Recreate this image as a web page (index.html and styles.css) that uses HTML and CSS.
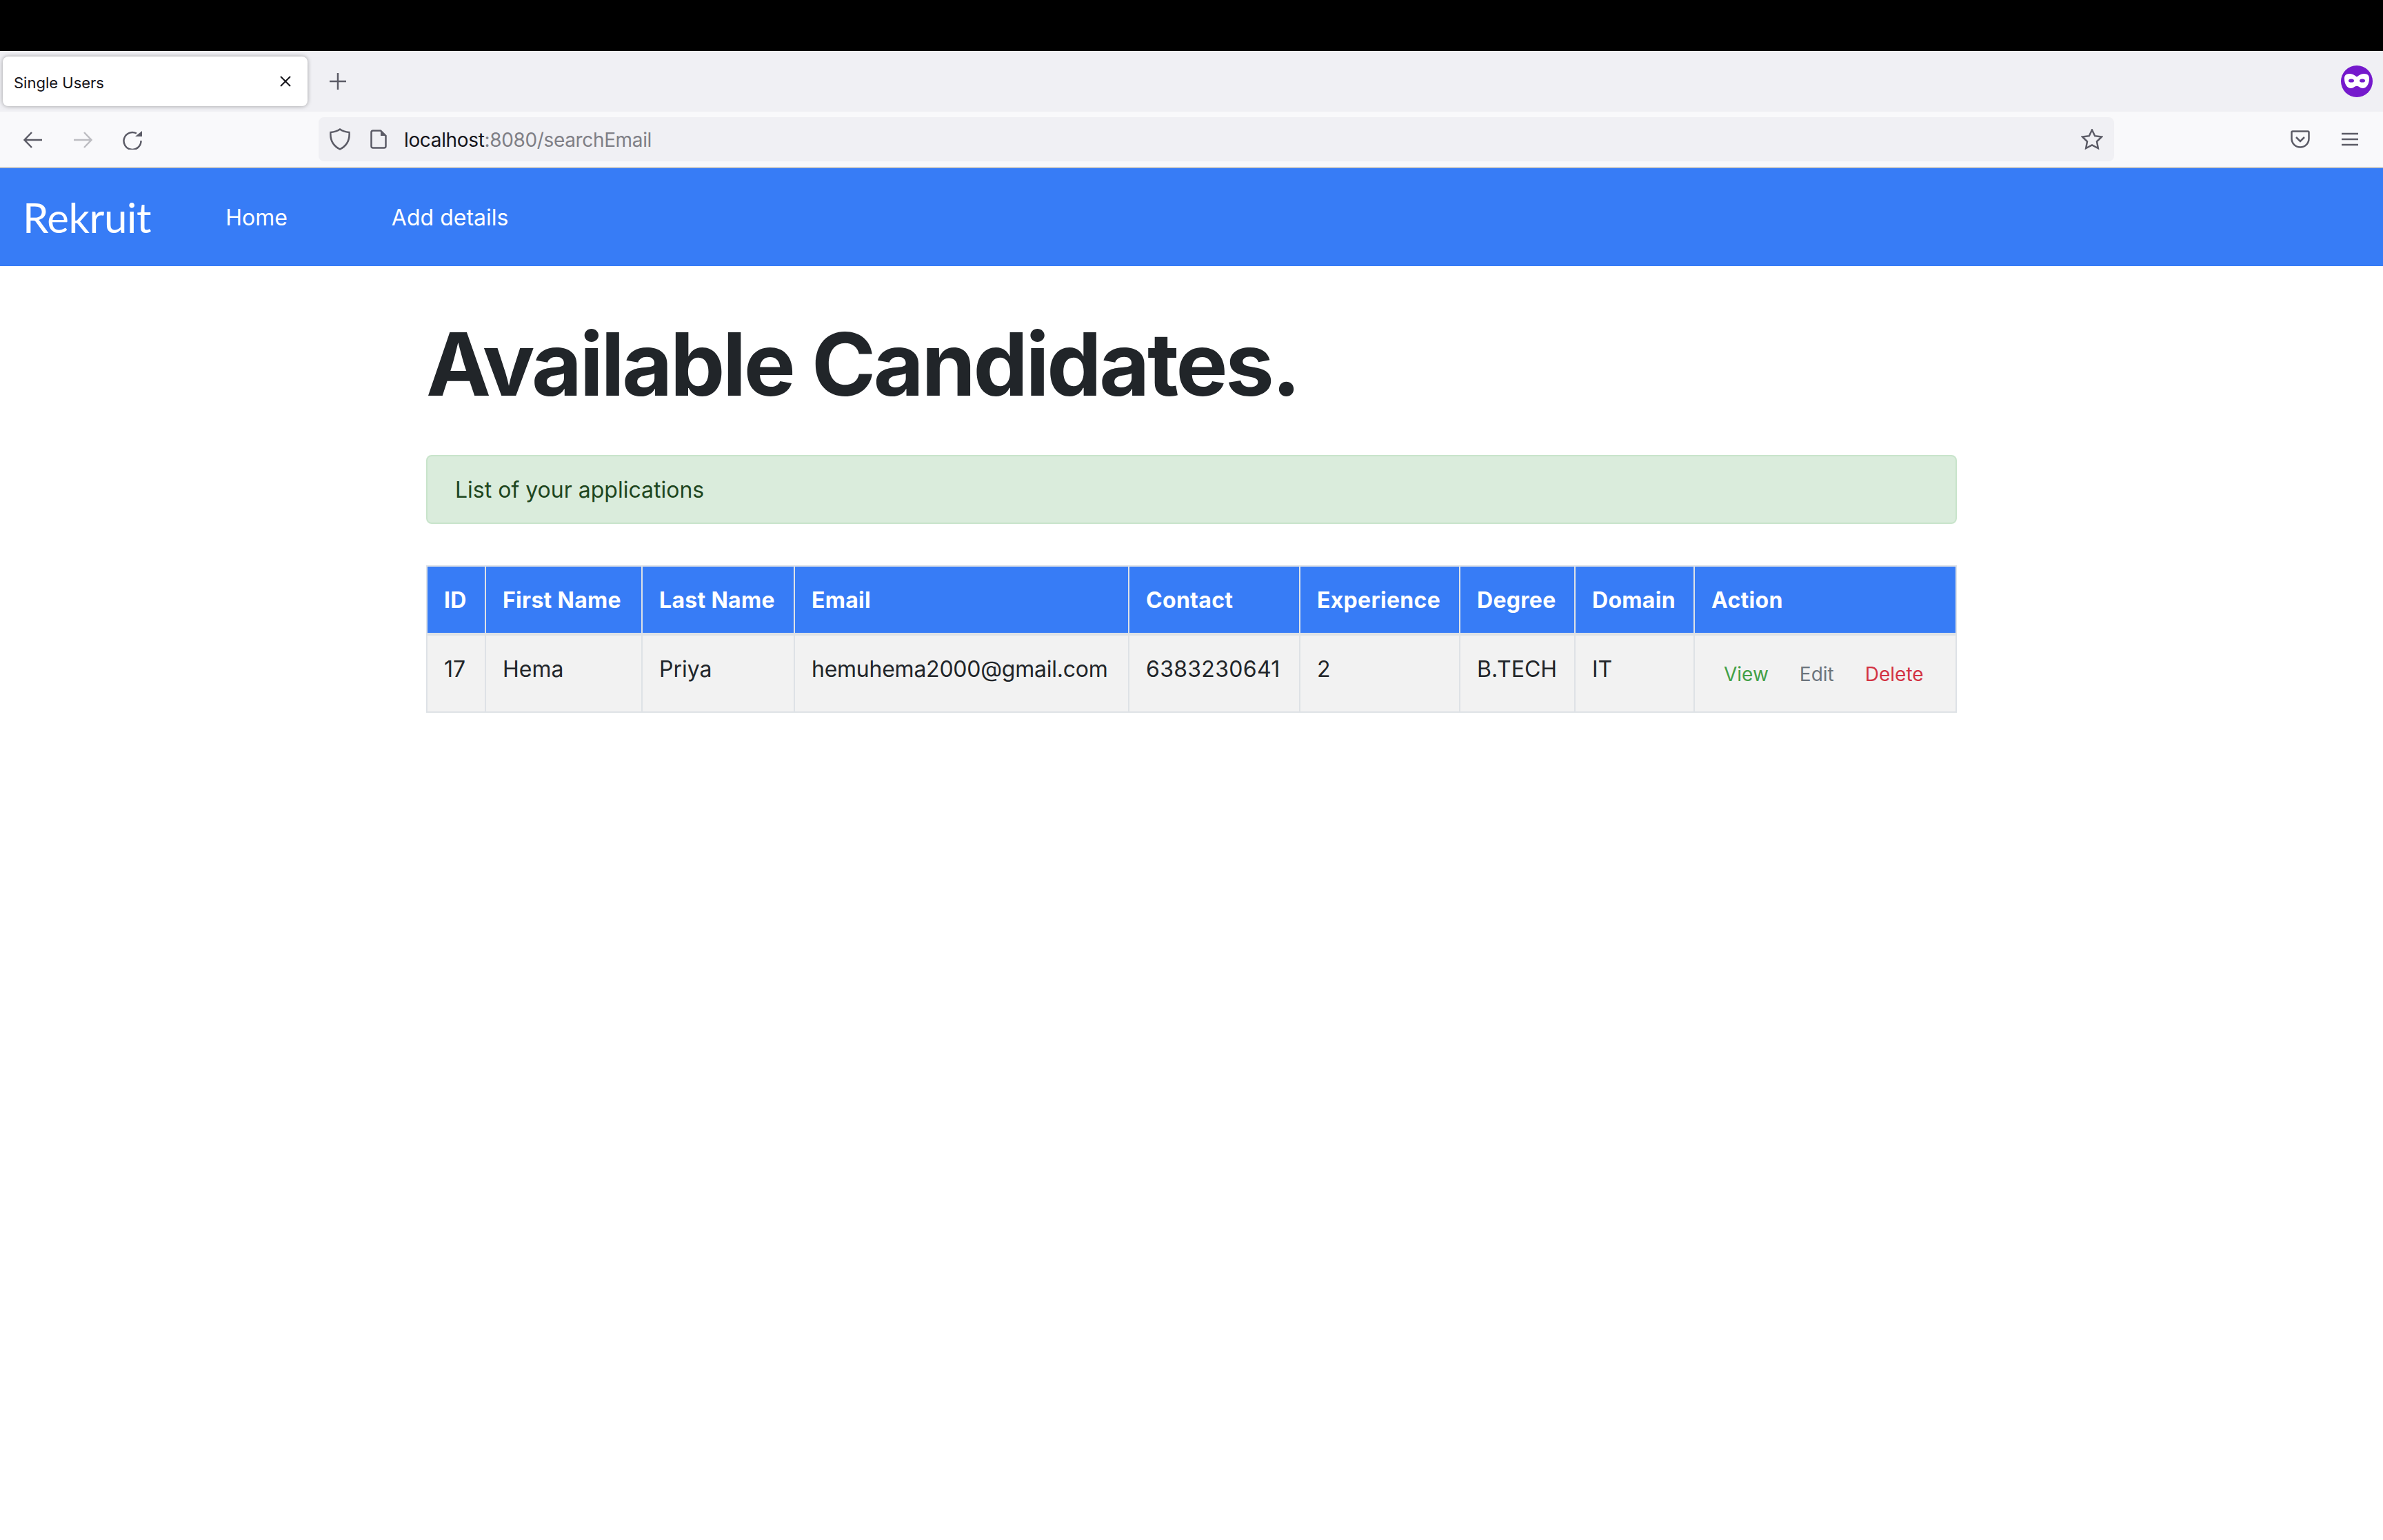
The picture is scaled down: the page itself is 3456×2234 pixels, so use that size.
FILE: index.html
```html
<!DOCTYPE html>
<html lang="en">
<head>
  <meta charset="UTF-8" />
  <title>Single Users</title>
  <link rel="stylesheet" href="styles.css">
</head>

<body>
  <!-- Browser chrome -->
  <div class="topbar"></div>
  <div class="tabstrip">
    <div class="tab">
      <span class="tab-title">Single Users</span>
      <svg class="tab-close" viewBox="0 0 16 16"><path d="M1 1 15 15M15 1 1 15"/></svg>
    </div>
    <svg class="new-tab" viewBox="0 0 26 26"><path d="M13 1V25M1 13H25"/></svg>
    <svg class="mask" viewBox="0 0 46 46">
      <circle cx="23" cy="23" r="23" fill="#7519cc"/>
      <path fill="#fff" d="M12 12C16.500 11.500 20 14 23 16.500C26 14 29.500 11.500 34 12C38.500 12.500 41 14 41 19C41 27 37 33 31.500 33C27.500 33 26 29.800 23 29.800C20 29.800 18.500 33 14.500 33C9 33 5 27 5 19C5 14 7.500 12.500 12 12Z"/>
      <ellipse cx="15" cy="22" rx="4" ry="2.600" fill="#7519cc"/>
      <ellipse cx="31" cy="22" rx="4" ry="2.600" fill="#7519cc"/>
    </svg>
  </div>
  <div class="toolbar">
    <svg class="tool back" viewBox="0 0 28 24"><path d="M27 12H2M12 1 1.500 12 12 23"/></svg>
    <svg class="tool forward" viewBox="0 0 28 24"><path d="M1 12H26M16 1 26.500 12 16 23"/></svg>
    <svg class="tool reload" viewBox="0 0 28 28">
      <path d="M26.500 15A12.500 12.500 0 1 1 20 4.500"/>
      <path class="solid" d="M18 9 28 1V9Z"/>
    </svg>
    <div class="urlbar">
      <svg class="tool shield" viewBox="0 0 30 32"><path d="M15 1.500C19 4.500 23.500 5.500 28.500 6C29.500 18 24 26 15 30.500C6 26 .5 18 1.500 6C6.500 5.500 11 4.500 15 1.500Z"/></svg>
      <svg class="tool doc" viewBox="0 0 24 28">
        <path d="M4 1.500H15L22.500 9V24C22.500 25.500 21.500 26.500 20 26.500H4C2.500 26.500 1.500 25.500 1.500 24V4C1.500 2.500 2.500 1.500 4 1.500Z"/>
        <path class="solid" d="M15 1.500 22.500 9H15Z"/>
      </svg>
      <span class="url">localhost<span class="url-rest">:8080/searchEmail</span></span>
      <svg class="tool star" viewBox="0 0 32 30"><path d="M16 1.500 20.200 10.200 30 11.500 23 18.300 24.800 28 16 23.300 7.200 28 9 18.300 2 11.500 11.800 10.200Z"/></svg>
    </div>
    <svg class="tool pocket" viewBox="0 0 28 26">
      <path d="M3 1.500H25C26 1.500 26.500 2 26.500 3V12C26.500 19 21 24.500 14 24.500C7 24.500 1.500 19 1.500 12V3C1.500 2 2 1.500 3 1.500Z"/>
      <path d="M8 10 14 16 20 10"/>
    </svg>
    <svg class="tool menu" viewBox="0 0 24 20"><path d="M0 2H24M0 10H24M0 18H24"/></svg>
  </div>

  <!-- Navigation -->
  <nav class="navbar">
    <a class="brand" href="#">Rekruit</a>
    <a class="nav-link" href="#">Home</a>
    <a class="nav-link" href="#">Add details</a>
  </nav>

  <main class="container">
    <h1 class="page-title">Available Candidates.</h1>
    <div class="alert">List of your applications</div>

    <table class="users">
      <colgroup>
        <col class="col-id">
        <col class="col-first">
        <col class="col-last">
        <col class="col-email">
        <col class="col-contact">
        <col class="col-exp">
        <col class="col-degree">
        <col class="col-domain">
        <col class="col-action">
      </colgroup>
      <thead>
        <tr>
          <th>ID</th>
          <th>First Name</th>
          <th>Last Name</th>
          <th>Email</th>
          <th>Contact</th>
          <th>Experience</th>
          <th>Degree</th>
          <th>Domain</th>
          <th>Action</th>
        </tr>
      </thead>
      <tbody>
        <tr>
          <td>17</td>
          <td>Hema</td>
          <td>Priya</td>
          <td class="cell-email">hemuhema2000@gmail.com</td>
          <td class="cell-phone">6383230641</td>
          <td>2</td>
          <td>B.TECH</td>
          <td>IT</td>
          <td>
            <div class="actions">
              <a class="btn btn-view" href="#">View</a>
              <a class="btn btn-edit" href="#">Edit</a>
              <a class="btn btn-delete" href="#">Delete</a>
            </div>
          </td>
        </tr>
      </tbody>
    </table>
  </main>
</body>
</html>
```

FILE: styles.css
```css
body {
  margin: 0;
  background: #fff;
  color: #212529;
  font-family: Inter, "Liberation Sans", sans-serif;
  font-size: 32px;
  line-height: 48px;
}

a {
  text-decoration: none;
}

svg {
  display: block;
  flex: none;
}

/* browser chrome */
.topbar {
  height: 74px;
  background: #000;
}

.tabstrip {
  height: 88px;
  background: #f0f0f4;
  display: flex;
  align-items: center;
  padding: 0 15px 0 4px;
}

.tab {
  width: 442px;
  height: 72px;
  box-sizing: border-box;
  padding: 0 24px 0 16px;
  background: #fff;
  border-radius: 8px;
  box-shadow: 0 0 6px rgba(0, 0, 0, 0.35);
  display: flex;
  align-items: center;
  justify-content: space-between;
}

.tab-title {
  font-size: 22px;
  line-height: 30px;
  color: #15141a;
  margin-top: 4px;
}

.tab-close {
  width: 16px;
  height: 16px;
  fill: none;
  stroke: #15141a;
  stroke-width: 2;
}

.new-tab {
  width: 26px;
  height: 26px;
  margin-left: 31px;
  fill: none;
  stroke: #5b5b66;
  stroke-width: 2.500;
}

.mask {
  width: 46px;
  height: 46px;
  margin-left: auto;
}

.toolbar {
  height: 80px;
  background: #f9f9fb;
  border-bottom: 2px solid #ccc;
  display: flex;
  align-items: center;
}

.tool {
  fill: none;
  stroke: #5b5b66;
  stroke-width: 2.500;
}

.tool .solid {
  fill: #5b5b66;
  stroke: none;
}

.back {
  width: 28px;
  height: 24px;
  margin-left: 34px;
  margin-top: 2px;
}

.forward {
  width: 28px;
  height: 24px;
  margin-left: 44px;
  margin-top: 2px;
  stroke: #bdbdc2;
}

.reload {
  width: 28px;
  height: 28px;
  margin-left: 44px;
  margin-top: 2px;
}

.urlbar {
  width: 2604px;
  height: 64px;
  margin-left: 256px;
  background: #f0f0f4;
  border-radius: 8px;
  display: flex;
  align-items: center;
  padding: 0 16px;
  box-sizing: border-box;
}

.shield {
  width: 30px;
  height: 32px;
}

.doc {
  width: 24px;
  height: 28px;
  margin-left: 29px;
}

.url {
  margin-left: 25px;
  margin-top: 2px;
  font-size: 28px;
  line-height: 40px;
  letter-spacing: -0.35px;
  color: #15141a;
}

.url-rest {
  color: #7f7f86;
}

.star {
  width: 32px;
  height: 30px;
  margin-left: auto;
}

.pocket {
  width: 28px;
  height: 26px;
  margin-left: 256px;
}

.menu {
  width: 24px;
  height: 20px;
  margin-left: 46px;
}

/* site nav */
.navbar {
  height: 142px;
  background: #377cf6;
  display: flex;
  align-items: center;
  padding-left: 33px;
}

.brand {
  font-family: Lato, sans-serif;
  font-weight: 400;
  font-size: 60px;
  line-height: 72px;
  letter-spacing: -0.4px;
  color: #fff;
  margin-right: 108px;
}

.nav-link {
  color: #fff;
  margin-right: 151px;
  margin-top: 2px;
}

/* page */
.container {
  width: 2220px;
  margin: 0 auto;
  padding-top: 65px;
}

.page-title {
  margin: 0 0 55px;
  font-size: 126px;
  line-height: 154px;
  font-weight: 700;
  letter-spacing: -3.4px;
}

.alert {
  padding: 25px 40px 23px;
  margin-bottom: 60px;
  background: #daecdc;
  border: 2px solid #c8e4cb;
  border-radius: 8px;
  color: #1e4620;
}

.users {
  width: 2218px;
  table-layout: fixed;
  border-collapse: collapse;
  border: 2px solid #dee2e6;
}

.col-id { width: 85px; }
.col-first { width: 227px; }
.col-last { width: 221px; }
.col-email { width: 485px; }
.col-contact { width: 248px; }
.col-exp { width: 232px; }
.col-degree { width: 167px; }
.col-domain { width: 173px; }
.col-action { width: 380px; }

.users th,
.users td {
  padding: 25px 24px 23px;
  text-align: left;
  vertical-align: top;
  border: 2px solid #dee2e6;
  white-space: nowrap;
}

.users th {
  background: #377cf6;
  color: #fff;
  font-weight: 700;
  letter-spacing: 0.3px;
  border-bottom-width: 4px;
}

.users td {
  background: #f2f2f2;
}

.users .cell-email {
  letter-spacing: -0.25px;
}

.users .cell-phone {
  letter-spacing: 0.3px;
}

.actions {
  display: flex;
  gap: 9px;
}

.btn {
  padding: 8px 16px;
  border: 2px solid transparent;
  font-size: 28px;
  line-height: 42px;
}

.btn-view { color: #43a047; }
.btn-edit { color: #6c757d; }
.btn-delete { color: #d33343; }
```
